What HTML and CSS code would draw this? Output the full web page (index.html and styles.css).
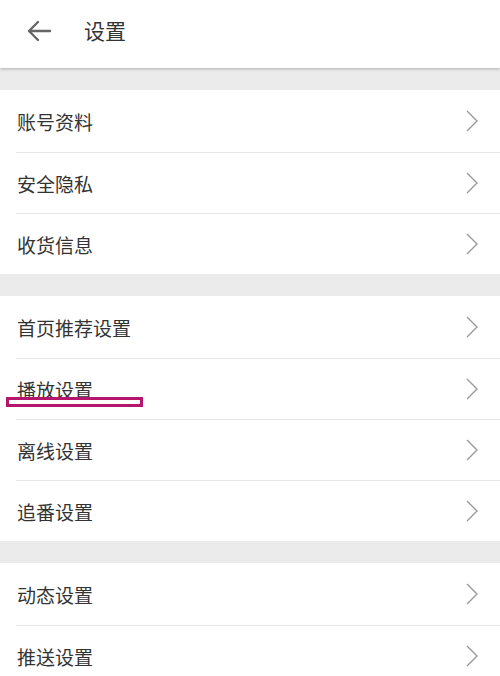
FILE: index.html
```html
<!DOCTYPE html>
<html lang="zh">
<head>
<meta charset="utf-8">
<link rel="stylesheet" href="styles.css">
</head>
<body>
<div class="page">
  <header class="topbar">
    <svg class="back" width="26" height="22" viewBox="0 0 26 22"><path d="M24 11H3M12 2L3 11l9 9" fill="none" stroke="#666" stroke-width="2.4" stroke-linecap="round" stroke-linejoin="round"/></svg>
    <h1 class="title">设置</h1>
  </header>
  <div class="gap"></div>
  <ul class="group">
    <li class="row"><span>账号资料</span><svg class="chev" width="14" height="24" viewBox="0 0 14 24"><path d="M2 2l10 10-10 10" fill="none" stroke="#999" stroke-width="1.4"/></svg></li>
    <li class="row"><span>安全隐私</span><svg class="chev" width="14" height="24" viewBox="0 0 14 24"><path d="M2 2l10 10-10 10" fill="none" stroke="#999" stroke-width="1.4"/></svg></li>
    <li class="row"><span>收货信息</span><svg class="chev" width="14" height="24" viewBox="0 0 14 24"><path d="M2 2l10 10-10 10" fill="none" stroke="#999" stroke-width="1.4"/></svg></li>
  </ul>
  <div class="gap"></div>
  <ul class="group">
    <li class="row"><span>首页推荐设置</span><svg class="chev" width="14" height="24" viewBox="0 0 14 24"><path d="M2 2l10 10-10 10" fill="none" stroke="#999" stroke-width="1.4"/></svg></li>
    <li class="row marked"><span>播放设置</span><svg class="chev" width="14" height="24" viewBox="0 0 14 24"><path d="M2 2l10 10-10 10" fill="none" stroke="#999" stroke-width="1.4"/></svg><div class="mark"></div></li>
    <li class="row"><span>离线设置</span><svg class="chev" width="14" height="24" viewBox="0 0 14 24"><path d="M2 2l10 10-10 10" fill="none" stroke="#999" stroke-width="1.4"/></svg></li>
    <li class="row"><span>追番设置</span><svg class="chev" width="14" height="24" viewBox="0 0 14 24"><path d="M2 2l10 10-10 10" fill="none" stroke="#999" stroke-width="1.4"/></svg></li>
  </ul>
  <div class="gap"></div>
  <ul class="group">
    <li class="row"><span>动态设置</span><svg class="chev" width="14" height="24" viewBox="0 0 14 24"><path d="M2 2l10 10-10 10" fill="none" stroke="#999" stroke-width="1.4"/></svg></li>
    <li class="row"><span>推送设置</span><svg class="chev" width="14" height="24" viewBox="0 0 14 24"><path d="M2 2l10 10-10 10" fill="none" stroke="#999" stroke-width="1.4"/></svg></li>
  </ul>
</div>
</body>
</html>
```
FILE: styles.css
```css
html, body {
  margin: 0;
  padding: 0;
  background: #fff;
}
body {
  width: 500px;
  height: 676px;
  overflow: hidden;
  font-family: "Noto Sans CJK SC", "Noto Sans", sans-serif;
  color: #333;
}
.page {
  display: flex;
  flex-direction: column;
}
.topbar {
  height: 68px;
  display: flex;
  align-items: center;
  background: #fff;
  box-shadow: 0 1px 3px rgba(0,0,0,0.25);
  position: relative;
  z-index: 1;
}
.back {
  margin-left: 26px;
  margin-right: 32px;
  margin-top: -6px;
}
.title {
  margin: 0;
  font-size: 21px;
  font-weight: 400;
  color: #333;
  margin-top: -8px;
}
.gap {
  height: 22px;
  background: #ebebeb;
}
.group {
  list-style: none;
  margin: 0;
  padding: 0;
}
.row {
  height: 61px;
  display: flex;
  align-items: center;
  justify-content: space-between;
  margin-left: 16px;
  padding-right: 21px;
  border-top: 1px solid #e6e6e6;
  font-size: 19px;
  box-sizing: border-box;
  position: relative;
}
.row:first-child {
  border-top: none;
  height: 62px;
}
.row span {
  margin-left: 1px;
  margin-top: 0;
}
.chev {
  margin-top: -1px;
}
.mark {
  position: absolute;
  left: -10px;
  top: 38px;
  width: 137px;
  height: 10px;
  box-sizing: border-box;
  border: 3px solid #b5156c;
  background: #fff;
}
```
